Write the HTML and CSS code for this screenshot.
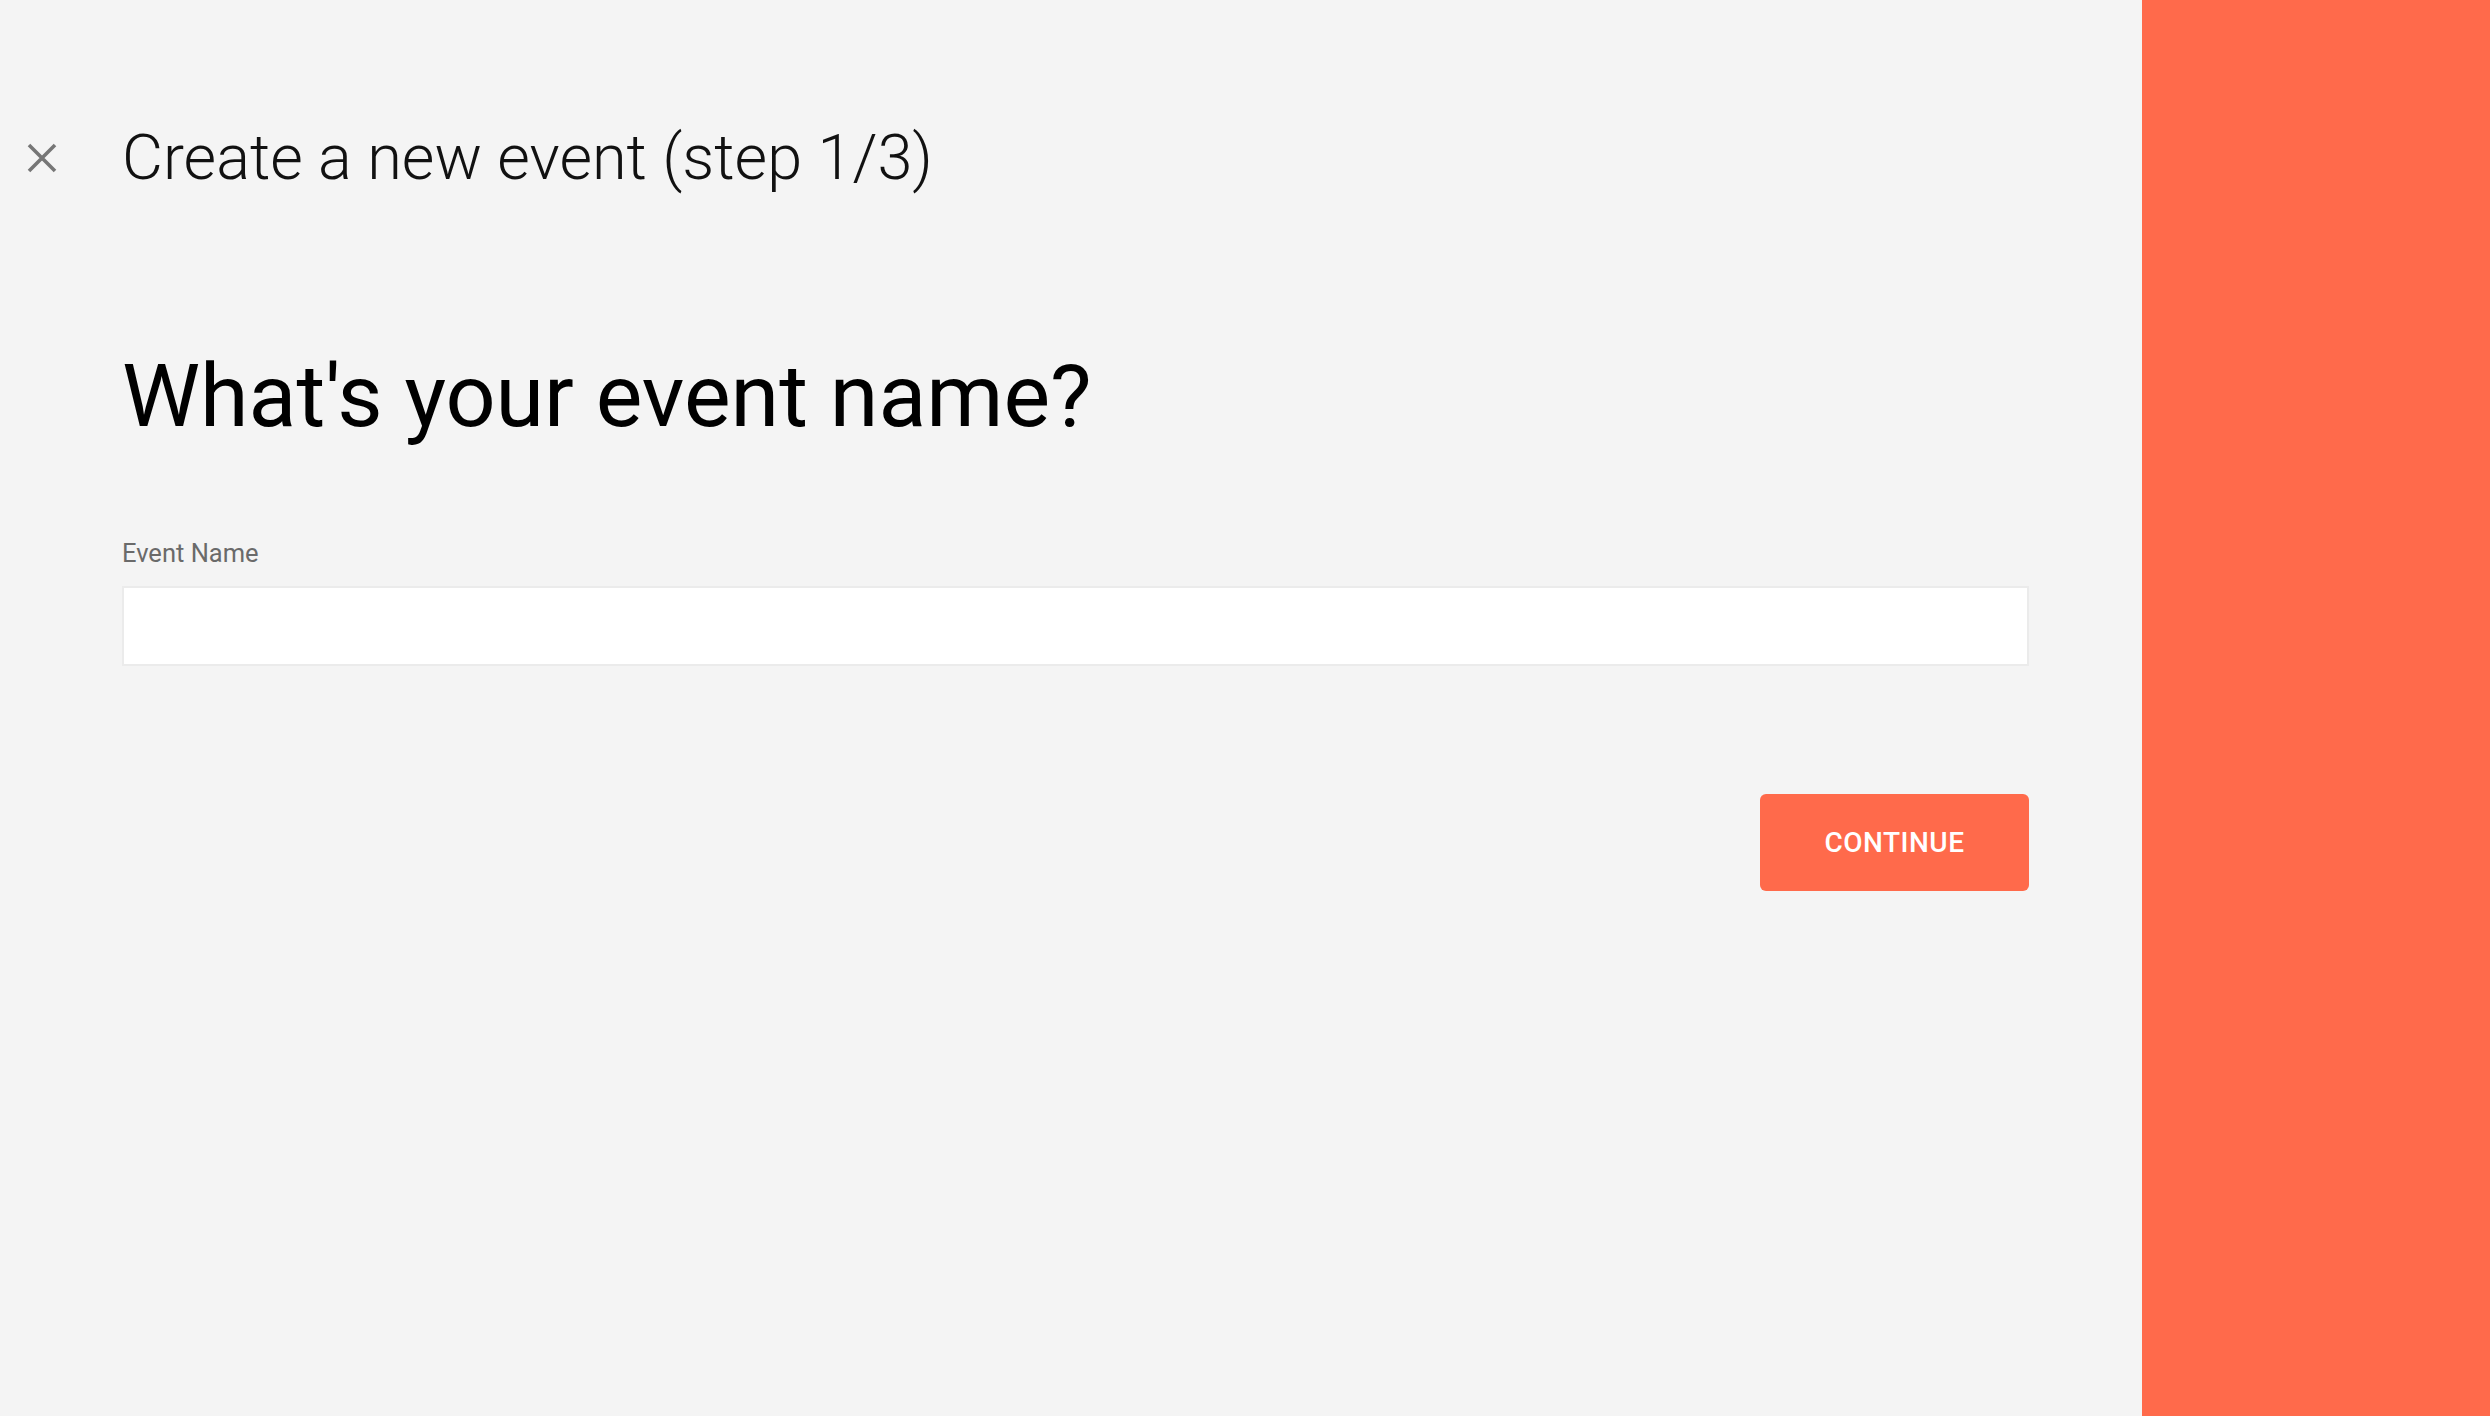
FILE: index.html
```html
<!DOCTYPE html>
<html lang="en">
<head>
<meta charset="utf-8">
<title>Create a new event</title>
<link rel="stylesheet" href="styles.css">
</head>
<body>
<div class="page">
  <main class="main">
    <header class="header">
      <button class="close" aria-label="Close">
        <svg viewBox="0 0 30 30" width="30" height="30"><path d="M2 2 L28 28 M28 2 L2 28" stroke="#767676" stroke-width="3.6" fill="none"/></svg>
      </button>
      <h1 class="title">Create a new event (step 1/3)</h1>
    </header>
    <section class="form">
      <h2 class="question">What's your event name?</h2>
      <label class="label" for="event-name">Event Name</label>
      <input class="input" id="event-name" type="text">
      <div class="actions">
        <button class="continue">CONTINUE</button>
      </div>
    </section>
  </main>
  <aside class="side"></aside>
</div>
</body>
</html>
```
FILE: styles.css
```css
html, body {
  margin: 0;
  padding: 0;
  height: 100%;
}
body {
  background: #f4f4f4;
  font-family: Roboto, "Liberation Sans", Arial, sans-serif;
  color: #000;
}
.page {
  display: flex;
  min-height: 1416px;
}
.main {
  flex: 0 0 2142px;
  box-sizing: border-box;
  padding: 120px 0 0 27px;
}
.header {
  display: flex;
  align-items: center;
  gap: 65px;
}
.close {
  width: 30px;
  height: 30px;
  padding: 0;
  border: 0;
  background: none;
  display: flex;
  cursor: pointer;
}
.title {
  margin: 0;
  font-size: 63px;
  line-height: 76px;
  font-weight: 300;
  color: #111;
}
.form {
  margin-left: 95px;
  width: 1907px;
  display: flex;
  flex-direction: column;
}
.question {
  margin: 148px 0 0 0;
  font-size: 88px;
  line-height: 104px;
  font-weight: 400;
  color: #000;
}
.label {
  margin-top: 90px;
  font-size: 25.5px;
  line-height: 30px;
  color: #6a6a6a;
}
.input {
  margin-top: 18px;
  box-sizing: border-box;
  width: 100%;
  height: 80px;
  border: 2px solid #ebebeb;
  background: #fff;
  font-family: inherit;
  font-size: 28px;
  padding: 0 20px;
  outline: none;
}
.actions {
  margin-top: 128px;
  display: flex;
  justify-content: flex-end;
}
.continue {
  width: 269px;
  height: 97px;
  border: 0;
  border-radius: 6px;
  background: #ff6a4b;
  color: #fff;
  font-family: inherit;
  font-size: 28px;
  font-weight: 500;
  letter-spacing: 0.5px;
  cursor: pointer;
}
.side {
  flex: 1 1 auto;
  background: #ff6a4b;
}
```
